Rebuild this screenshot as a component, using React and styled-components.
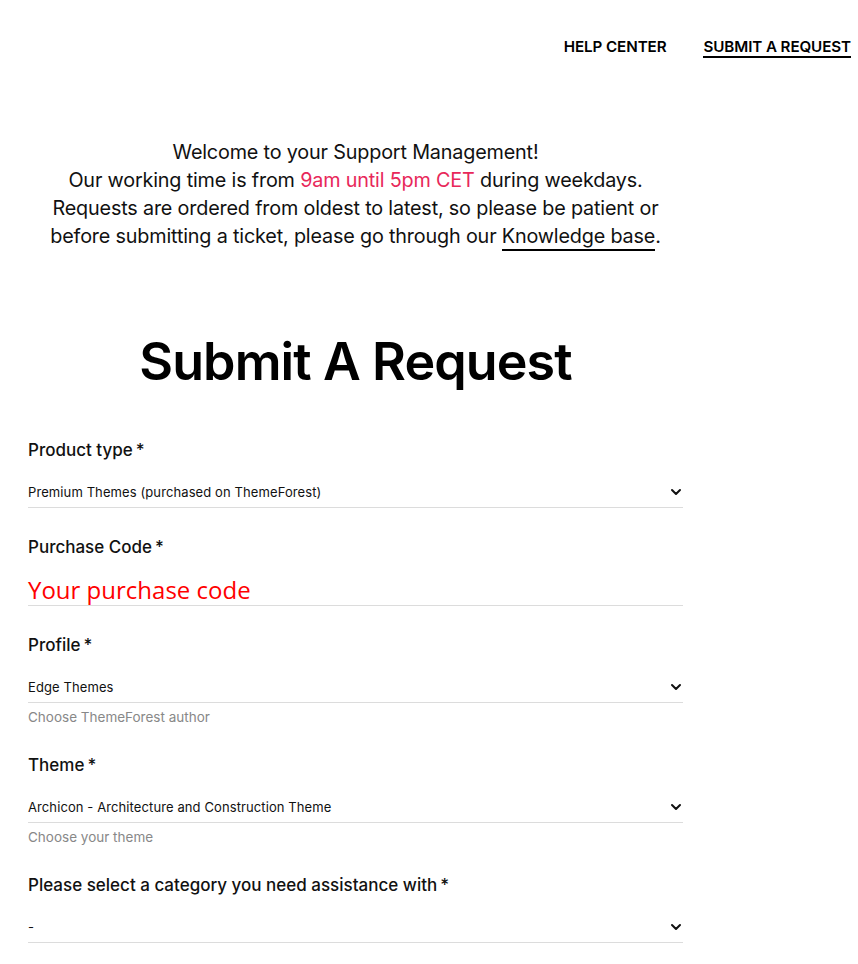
import React from "react";
import styled, { createGlobalStyle } from "styled-components";

const Global = createGlobalStyle`
  html, body { margin: 0; padding: 0; background: #fff; }
  body { font-family: Inter, "Noto Sans", sans-serif; color: #111; }
  * { box-sizing: border-box; }
`;

const Page = styled.div`
  width: 858px;
  min-height: 964px;
  background: #fff;
`;

const TopNav = styled.nav`
  display: flex;
  justify-content: flex-end;
  gap: 37px;
  padding: 37px 7px 0 0;
  height: 60px;
`;

const NavLink = styled.a`
  font-size: 15.2px;
  line-height: 20px;
  font-weight: 600;
  color: #000;
  text-decoration: none;
  letter-spacing: -0.1px;
  border-bottom: 2px solid ${(p) => (p.$active ? "#000" : "transparent")};
  height: 21px;
`;

const Column = styled.main`
  width: 655px;
  margin-left: 28px;
`;

const Intro = styled.p`
  margin: 78px 0 0;
  text-align: center;
  font-size: 19.8px;
  line-height: 28px;
  font-weight: 400;
  color: #111;
  letter-spacing: -0.17px;
`;

const Accent = styled.span`
  color: #e8285a;
`;

const KbLink = styled.a`
  color: #111;
  text-decoration: none;
  border-bottom: 2px solid #000;
  padding-bottom: 1px;
`;

const Heading = styled.h1`
  margin: 82px 0 0;
  text-align: center;
  font-size: 52px;
  line-height: 60px;
  font-weight: 600;
  color: #000;
  letter-spacing: -0.9px;
`;

const Form = styled.form`
  margin-top: 46px;
  display: flex;
  flex-direction: column;
  gap: 27px;
`;

const Field = styled.div`
  display: flex;
  flex-direction: column;
`;

const Label = styled.label`
  font-size: 17px;
  line-height: 24px;
  font-weight: 500;
  color: #111;
  margin-bottom: 13px;
  letter-spacing: 0px;
`;

const Star = styled.span`
  margin-left: 3px;
`;

const SelectRow = styled.div`
  display: flex;
  align-items: center;
  justify-content: space-between;
  height: 33px;
  padding-top: 1px;
  border-bottom: 1px solid #dcdcdc;
  font-size: 13px;
  color: #111;
  letter-spacing: 0.1px;
`;

const Chevron = styled.svg`
  width: 12px;
  height: 12px;
  margin-right: 1px;
`;

const CodeInput = styled.div`
  height: 34px;
  padding-top: 2px;
  border-bottom: 1px solid #dcdcdc;
  font-family: "Open Sans", sans-serif;
  font-size: 24px;
  line-height: 31px;
  color: #ff0000;
`;

const Help = styled.div`
  margin-top: 5px;
  font-size: 13.5px;
  line-height: 18px;
  color: #888;
`;

function Select({ value }) {
  return (
    <SelectRow>
      <span>{value}</span>
      <Chevron viewBox="0 0 12 12" fill="none">
        <path d="M2 4l4 4 4-4" stroke="#111" strokeWidth="2" strokeLinecap="round" strokeLinejoin="round" />
      </Chevron>
    </SelectRow>
  );
}

export default function App() {
  return (
    <Page>
      <Global />
      <TopNav>
        <NavLink href="#">HELP CENTER</NavLink>
        <NavLink href="#" $active>SUBMIT A REQUEST</NavLink>
      </TopNav>
      <Column>
        <Intro>
          Welcome to your Support Management!
          <br />
          Our working time is from <Accent>9am until 5pm CET</Accent> during weekdays.
          <br />
          Requests are ordered from oldest to latest, so please be patient or
          <br />
          before submitting a ticket, please go through our <KbLink href="#">Knowledge base</KbLink>.
        </Intro>
        <Heading>Submit A Request</Heading>
        <Form>
          <Field>
            <Label>Product type<Star>*</Star></Label>
            <Select value="Premium Themes (purchased on ThemeForest)" />
          </Field>
          <Field>
            <Label>Purchase Code<Star>*</Star></Label>
            <CodeInput>Your purchase code</CodeInput>
          </Field>
          <Field>
            <Label>Profile<Star>*</Star></Label>
            <Select value="Edge Themes" />
            <Help>Choose ThemeForest author</Help>
          </Field>
          <Field>
            <Label>Theme<Star>*</Star></Label>
            <Select value="Archicon - Architecture and Construction Theme" />
            <Help>Choose your theme</Help>
          </Field>
          <Field>
            <Label>Please select a category you need assistance with<Star>*</Star></Label>
            <Select value="-" />
          </Field>
        </Form>
      </Column>
    </Page>
  );
}
